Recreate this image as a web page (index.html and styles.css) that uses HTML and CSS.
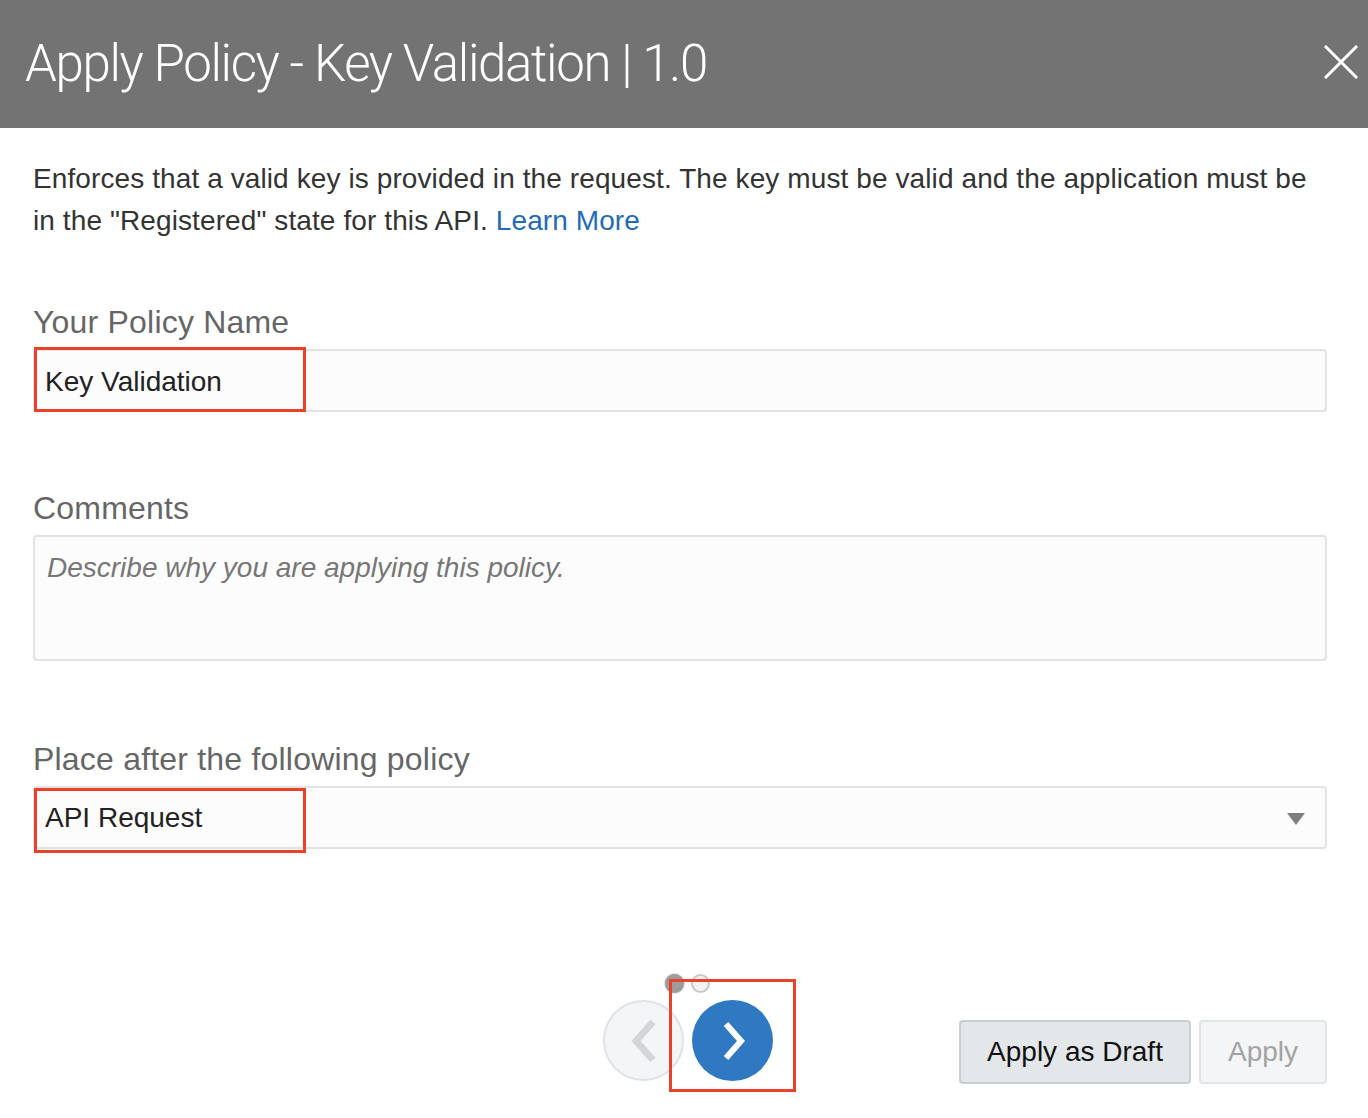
FILE: index.html
```html
<!DOCTYPE html>
<html>
<head>
<meta charset="utf-8">
<link rel="stylesheet" href="styles.css">
</head>
<body>
<div class="dialog">
  <header class="dlg-header">
    <h1 class="dlg-title">Apply Policy - Key Validation | 1.0</h1>
    <svg class="close" width="34" height="34" viewBox="0 0 34 34"><path d="M2 2 L32 32 M32 2 L2 32" stroke="#fff" stroke-width="3" stroke-linecap="square" fill="none"/></svg>
  </header>
  <main class="dlg-body">
    <p class="desc">Enforces that a valid key is provided in the request. The key must be valid and the application must be in the "Registered" state for this API. <a class="link" href="#">Learn More</a></p>

    <div class="field field-name">
      <label class="label">Your Policy Name</label>
      <div class="input-wrap">
        <div class="input">Key Validation</div>
        <div class="highlight"></div>
      </div>
    </div>

    <div class="field field-comments">
      <label class="label">Comments</label>
      <div class="textarea">Describe why you are applying this policy.</div>
    </div>

    <div class="field field-place">
      <label class="label">Place after the following policy</label>
      <div class="input-wrap">
        <div class="input select">API Request
          <svg class="caret" width="18" height="12" viewBox="0 0 18 12"><path d="M0 0 H18 L9 12 Z" fill="#7d7f83"/></svg>
        </div>
        <div class="highlight"></div>
      </div>
    </div>

    <footer class="dlg-footer">
      <div class="spacer"></div>
      <div class="pager">
        <div class="dots"><span class="dot dot-on"></span><span class="dot dot-off"></span></div>
        <div class="navs">
          <button class="nav nav-prev"><svg width="34" height="46" viewBox="0 0 34 46"><path d="M26 4 L9 23 L26 42" stroke="#d3d5d8" stroke-width="7" fill="none"/></svg></button>
          <button class="nav nav-next"><svg width="34" height="46" viewBox="0 0 34 46"><path d="M10 6 L25 23 L10 40" stroke="#fff" stroke-width="6" fill="none"/></svg></button>
          <div class="highlight hl-next"></div>
        </div>
      </div>
      <div class="actions">
        <button class="btn btn-draft">Apply as Draft</button>
        <button class="btn btn-apply">Apply</button>
      </div>
    </footer>
  </main>
</div>
</body>
</html>
```

FILE: styles.css
```css
* { box-sizing: border-box; }
html, body { margin: 0; padding: 0; background: #fff; }
body { font-family: "Liberation Sans", Arial, sans-serif; color: #333; width: 1368px; height: 1118px; overflow: hidden; }

.dlg-header {
  height: 128px;
  background: #737373;
  display: flex;
  align-items: center;
  justify-content: space-between;
  padding: 0 10px 0 25px;
}
.dlg-title {
  margin: 0;
  font-family: "Roboto", "Liberation Sans", sans-serif;
  font-weight: 300;
  font-size: 51px;
  color: #fff;
  letter-spacing: -1.35px;
  line-height: 1;
  padding-bottom: 2px;
}
.close { margin-top: -4px; }

.dlg-body { padding: 0 41px 0 33px; }

.desc {
  margin: 30px 0 0;
  font-size: 28px;
  line-height: 42px;
  color: #333;
  letter-spacing: 0.1px;
}
.link { color: #236bb3; text-decoration: none; }

.field { display: flex; flex-direction: column; }
.label { font-size: 32px; color: #666; line-height: 40px; margin-bottom: 7px; letter-spacing: 0.2px; }
.field-name { margin-top: 60px; }
.field-comments { margin-top: 76px; }
.field-place { margin-top: 78px; }

.input-wrap { position: relative; }
.input {
  height: 63px;
  background: #fcfcfc;
  border: 2px solid #e3e3e3;
  border-radius: 4px;
  padding: 0 10px;
  font-size: 28px;
  color: #222;
  display: flex;
  align-items: center;
}
.field-name .input { padding-top: 3px; }
.select { justify-content: space-between; padding-right: 20px; }
.caret { margin-top: 2px; }
.highlight {
  position: absolute;
  left: 1px; top: -2px;
  width: 272px; height: 65px;
  border: 3px solid #e9412a;
}
.field-place .highlight { top: 2px; }

.textarea {
  height: 126px;
  background: #fcfcfc;
  border: 2px solid #e3e3e3;
  border-radius: 4px;
  padding: 15px 12px;
  font-size: 28px;
  font-style: italic;
  color: #777;
}

.dlg-footer {
  margin-top: 125px;
  display: grid;
  grid-template-columns: 1fr auto 1fr;
  align-items: end;
}
.pager { display: flex; flex-direction: column; align-items: center; margin-left: 16px; position: relative; }
.dots { display: flex; gap: 7px; margin-bottom: 7px; margin-left: -2px; }
.dot { width: 19px; height: 19px; border-radius: 50%; display: block; }
.dot-on { background: #9c9c9c; box-shadow: 0 0 2px #999; }
.dot-off { background: #f2f2f2; border: 2px solid #c9c9c9; }
.navs { display: flex; gap: 8px; position: relative; }
.nav {
  width: 81px; height: 81px;
  border-radius: 50%;
  padding: 0;
  display: flex; align-items: center; justify-content: center;
  cursor: pointer;
}
.nav-prev { background: #f3f5f7; border: 2px solid #dfe3e7; }
.nav-next { background: #2f79c2; border: none; }
.hl-next { left: 66px; top: -21px; width: 127px; height: 113px; }

.actions { justify-self: end; display: flex; gap: 8px; margin-bottom: -3px; }
.btn {
  height: 64px;
  border-radius: 4px;
  font-family: "Liberation Sans", Arial, sans-serif;
  font-size: 28px;
  padding: 0 20px;
}
.btn-draft { background: #e4e7ea; border: 2px solid #c9cfd5; color: #111; width: 232px; }
.btn-apply { background: #f4f5f7; border: 2px solid #e2e5e8; color: #a3a3a3; width: 128px; }
```
